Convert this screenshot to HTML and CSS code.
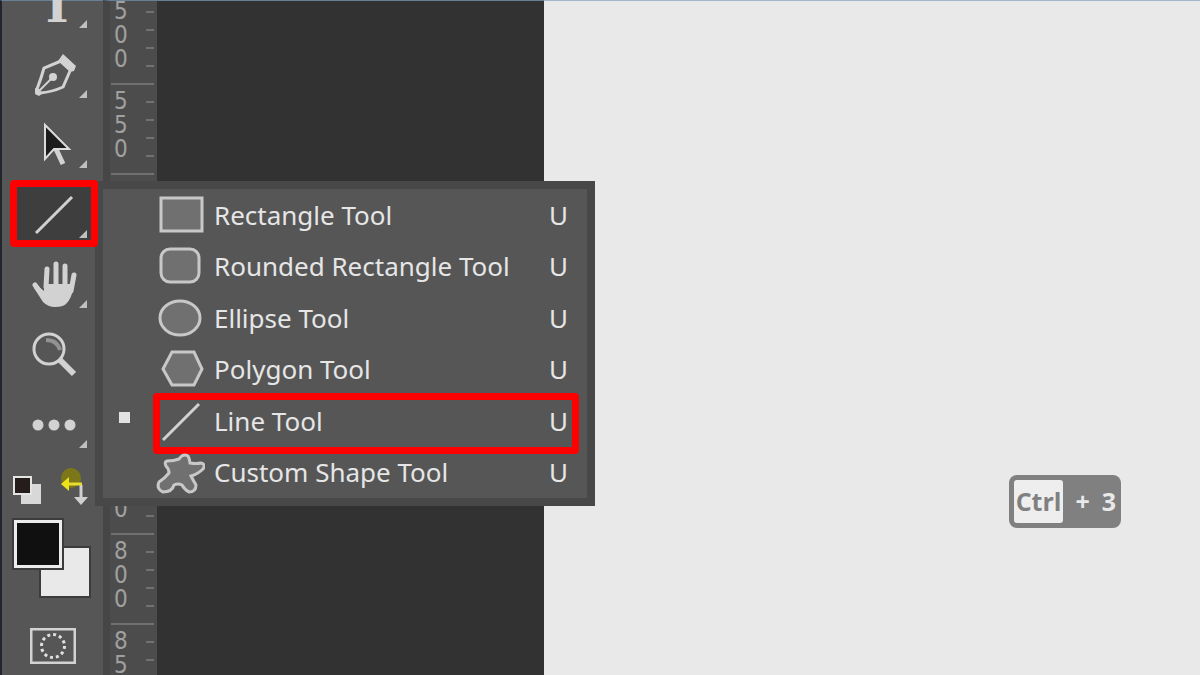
FILE: index.html
```html
<!DOCTYPE html>
<html lang="en">
<head>
    <meta charset="UTF-8">
    <meta name="viewport" content="width=device-width, initial-scale=1.0">
    <title>Shape tools</title>
    <link rel="stylesheet" href="styles.css">
</head>
<body>
    <div class="app">
        <aside class="toolbar">
            <div class="tools">
                <button class="tool has-more" aria-label="Type">
                    <svg viewBox="0 0 48 48"><text x="27" y="41" class="type-icon">T</text></svg>
                </button>
                <button class="tool has-more" aria-label="Pen">
                    <svg viewBox="0 0 48 48">
                        <path d="M31 10L14 17Q11 28 7 38L10 42Q22 41 33 36L40 20" class="stroke"/>
                        <path d="M9 40L23 26" class="stroke thin"/>
                        <circle cx="23" cy="26" r="4" class="fill"/>
                        <path d="M5 37L13 42L9 45L5 43Z M33 3L46 15L44 20L40 21L28 10Z" class="fill"/>
                    </svg>
                </button>
                <button class="tool has-more" aria-label="Path Selection">
                    <svg viewBox="0 0 48 48">
                        <path d="M26 28L33 43" class="stroke thick"/>
                        <path d="M15 4V38L24 28H39Z" class="arrow"/>
                    </svg>
                </button>
                <div class="tool-slot">
                    <button class="tool has-more active" aria-label="Line">
                        <svg viewBox="0 0 48 48"><path d="M6 42L42 6" class="stroke"/></svg>
                    </button>
                    <ul class="flyout">
                        <li><button class="item">
                            <svg viewBox="0 0 50 44"><rect x="6" y="5" width="41" height="33" class="shape"/></svg>
                            <span>Rectangle Tool</span><kbd>U</kbd>
                        </button></li>
                        <li><button class="item">
                            <svg viewBox="0 0 50 44"><rect x="6" y="5" width="38" height="33" rx="9" class="shape"/></svg>
                            <span>Rounded Rectangle Tool</span><kbd>U</kbd>
                        </button></li>
                        <li><button class="item">
                            <svg viewBox="0 0 50 44"><ellipse cx="25" cy="22" rx="20" ry="17" class="shape"/></svg>
                            <span>Ellipse Tool</span><kbd>U</kbd>
                        </button></li>
                        <li><button class="item">
                            <svg viewBox="0 0 50 44"><path d="M17 5H39L47 22L39 38H17L8 22Z" class="shape"/></svg>
                            <span>Polygon Tool</span><kbd>U</kbd>
                        </button></li>
                        <li><button class="item current">
                            <svg viewBox="0 0 50 44"><path d="M8 41L44 5" class="stroke"/></svg>
                            <span>Line Tool</span><kbd>U</kbd>
                        </button></li>
                        <li><button class="item">
                            <svg viewBox="0 0 50 44"><path d="M12 11Q19 11 24 9Q28 3 33 6Q35 10 35 13Q41 14 46 13Q51 14 48 19Q43 24 36 26Q38 30 41 35Q41 42 34 42Q29 39 27 35Q23 33 19 35Q17 42 8 42Q1 39 4 32Q10 28 14 23Q14 19 11 16Q9 12 12 11Z" class="shape"/></svg>
                            <span>Custom Shape Tool</span><kbd>U</kbd>
                        </button></li>
                    </ul>
                </div>
                <button class="tool has-more" aria-label="Hand">
                    <svg viewBox="0 0 48 48">
                        <path d="M16 26L17 8M26 25V3M35 25V5M41 30L44 14M5 24L14 36" class="finger"/>
                        <path d="M14 23H40L43 27Q42 37 36 43Q33 46 25 46Q18 46 13 41L4 27L9 26L14 30Z" class="fill"/>
                    </svg>
                </button>
                <button class="tool" aria-label="Zoom">
                    <svg viewBox="0 0 48 48">
                        <circle cx="19" cy="18" r="15" class="stroke"/>
                        <path d="M16 9Q27 9 30 19" class="glint"/>
                        <path d="M30 29L44 43" class="stroke handle"/>
                    </svg>
                </button>
                <button class="tool has-more" aria-label="Edit Toolbar">
                    <svg viewBox="0 0 48 48" class="fill"><circle cx="8" cy="24" r="5.5"/><circle cx="24" cy="24" r="5.5"/><circle cx="40" cy="24" r="5.5"/></svg>
                </button>
            </div>

            <div class="color-actions">
                <button aria-label="Default colors">
                    <svg viewBox="0 0 28 30">
                        <rect x="8" y="9" width="20" height="20" fill="#d8d8d8"/>
                        <rect x="1" y="2" width="17" height="17" fill="#251c1c" stroke="#e4e4e4" stroke-width="2"/>
                    </svg>
                </button>
                <button aria-label="Switch colors">
                    <svg viewBox="0 0 28 30">
                        <circle cx="10" cy="3" r="10" fill="#8d8600" opacity=".7"/>
                        <path d="M20 10V24" stroke="#d0d0d0" stroke-width="3"/>
                        <path d="M13 22H27L20 30Z" fill="#d0d0d0"/>
                        <path d="M7 9H21" stroke="#e8dc2c" stroke-width="3"/>
                        <path d="M8 2V16L0 9Z" fill="#ece21c"/>
                    </svg>
                </button>
            </div>

            <div class="swatches">
                <button class="swatch background" aria-label="Background color"></button>
                <button class="swatch foreground" aria-label="Foreground color"></button>
            </div>

            <button class="quick-mask" aria-label="Quick Mask Mode">
                <svg viewBox="0 0 46 36">
                    <rect x="1" y="1" width="44" height="34" class="stroke"/>
                    <circle cx="23" cy="18" r="11.5" class="dots"/>
                </svg>
            </button>
        </aside>

        <div class="ruler">
            <div class="mark">5<br>0<br>0</div>
            <div class="mark">5<br>5<br>0</div>
            <div class="mark">6<br>0<br>0</div>
            <div class="mark">6<br>5<br>0</div>
            <div class="mark">7<br>0<br>0</div>
            <div class="mark">7<br>5<br>0</div>
            <div class="mark">8<br>0<br>0</div>
            <div class="mark">8<br>5<br>0</div>
        </div>

        <div class="pasteboard"></div>

        <main class="document">
            <div class="keys"><kbd class="key">Ctrl</kbd><span>+</span><span>3</span></div>
        </main>
    </div>
</body>
</html>
```

FILE: styles.css
```css
* {
    box-sizing: border-box;
}

body {
    margin: 0;
    font-family: "Noto Sans", "Open Sans", sans-serif;
    background: #323232;
}

button {
    display: block;
    padding: 0;
    border: none;
    background: none;
    font: inherit;
    color: inherit;
    cursor: pointer;
}

kbd {
    font: inherit;
}

svg {
    display: block;
}

.app {
    display: flex;
    height: 100vh;
    overflow: hidden;
}

/* Toolbar */
.toolbar {
    position: relative;
    z-index: 1;
    flex: none;
    width: 103px;
    padding-left: 2px;
    border-left: 2px solid #20262c;
    border-top: 1px solid #66809a;
    background: #565656;
}

.tools {
    margin-top: -31px;
}

.tool {
    position: relative;
    width: 100%;
    height: 70px;
}

.tool svg {
    width: 48px;
    height: 48px;
    margin: 0 auto;
}

.has-more::after {
    content: "";
    position: absolute;
    right: 16px;
    top: 50px;
    border: 4px solid;
    border-color: transparent #c0c0c0 #c0c0c0 transparent;
}

.tool-slot {
    position: relative;
}

/* Red frames mark the tool and its menu entry */
.tool.active::before,
.item.current::after {
    content: "";
    position: absolute;
    border: 7px solid #ff0000;
    border-radius: 4px;
}

.tool.active::before {
    inset: 0 5px 3px 6px;
    z-index: 2;
}

.tool.active {
    background: linear-gradient(#3e3e3e, #3e3e3e) 10px 4px / 80px 60px no-repeat;
}

.stroke {
    fill: none;
    stroke: #d2d2d2;
    stroke-width: 3;
}

.thin {
    stroke-width: 2;
}

.thick {
    stroke-width: 5;
}

.handle {
    stroke-width: 6;
}

.glint {
    fill: none;
    stroke: #929292;
    stroke-width: 4;
}

.fill {
    fill: #d2d2d2;
}

.finger {
    fill: none;
    stroke: #d2d2d2;
    stroke-width: 5;
    stroke-linecap: round;
}

.arrow {
    fill: #1c1c1c;
    stroke: #dcdcdc;
    stroke-width: 2;
}

.type-icon {
    fill: #d2d2d2;
    font: bold 48px "DejaVu Serif", serif;
    text-anchor: middle;
}

.dots {
    fill: none;
    stroke: #e0e0e0;
    stroke-width: 3;
    stroke-dasharray: 3 3;
}

.color-actions {
    display: flex;
    gap: 20px;
    padding: 15px 9px 13px;
}

.color-actions svg {
    width: 28px;
    height: 30px;
    overflow: visible;
}

.swatches {
    position: relative;
    height: 80px;
    margin: 0 12px 0 8px;
}

.swatch {
    position: absolute;
    width: 52px;
    height: 52px;
    border: 2px solid #3c3c3c;
}

.foreground {
    left: 0;
    top: 0;
    background: #101010;
    box-shadow: inset 0 0 0 3px #ececec;
}

.background {
    right: 0;
    bottom: 0;
    background: #e9e9e9;
}

.quick-mask {
    width: 46px;
    margin: 30px 26px;
}

/* Shape tool menu */
.flyout {
    position: absolute;
    left: 91px;
    top: 1px;
    display: grid;
    grid-auto-rows: 1fr;
    width: 500px;
    height: 325px;
    margin: 0;
    padding: 0;
    border: 8px solid #484848;
    background: #565656;
    list-style: none;
    font-size: 26px;
    color: #e6e6e6;
}

.item {
    position: relative;
    display: flex;
    align-items: center;
    width: 100%;
    height: 100%;
    padding: 0 19px 0 52px;
    text-align: left;
}

.item svg {
    width: 50px;
    height: 44px;
    margin-right: 9px;
}

.item span {
    flex: 1;
}

.item.current::before {
    content: "";
    position: absolute;
    left: 16px;
    top: 17px;
    width: 11px;
    height: 11px;
    background: #e2e2e2;
}

.item.current::after {
    inset: -2px 8px -7px 50px;
}

.shape {
    fill: #707070;
    stroke: #c8c8c8;
    stroke-width: 3;
}

/* Vertical ruler */
.ruler {
    flex: none;
    width: 54px;
    overflow: hidden;
    border-left: 7px solid #464646;
    border-top: 1px solid #66809a;
    background: #4c4c4c;
}

.mark {
    height: 90px;
    margin: 0 3px 0 1px;
    padding: 4px 3px;
    border-top: 2px solid #707070;
    background: linear-gradient(#707070 2px, transparent 2px) right 16px / 8px 18px repeat-y;
    font: 24px/24px "DejaVu Sans Condensed", "DejaVu Sans", sans-serif;
    color: #a0a0a0;
}

.mark:first-child {
    margin-top: -8px;
}

/* Canvas */
.pasteboard {
    flex: 0 0 387px;
    border-top: 1px solid #66809a;
    background: #323232;
}

.document {
    position: relative;
    flex: 1;
    border-top: 1px solid #a5b7d0;
    background: #e9e9e9;
}

.keys {
    position: absolute;
    right: 79px;
    bottom: 147px;
    display: flex;
    align-items: center;
    gap: 12px;
    padding: 5px;
    border-radius: 8px;
    background: #808080;
    color: #e9e9e9;
    font: bold 25px/43px "Open Sans", "Noto Sans", sans-serif;
}

.key {
    padding: 0 2px;
    border-radius: 3px;
    background: #eeeeee;
    color: #808080;
}
```
